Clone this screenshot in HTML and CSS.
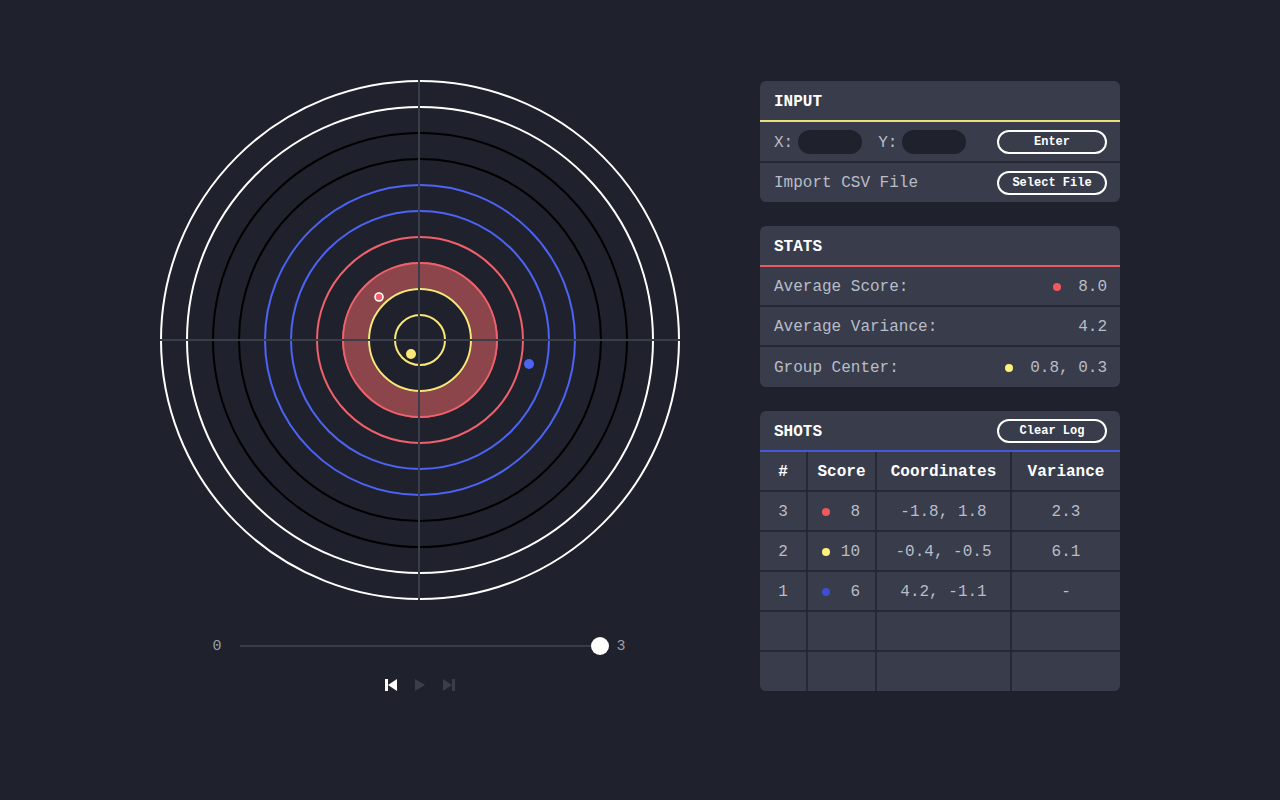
FILE: index.html
```html
<!DOCTYPE html>
<html>
<head>
<meta charset="utf-8">
<link rel="stylesheet" href="styles.css">
</head>
<body>
<div class="app">
  <div class="left">
    <svg class="target" width="520" height="520" viewBox="-260 -260 520 520">
      <circle r="65" fill="none" stroke="#8b454b" stroke-width="26"/>
      <circle r="259" class="ring" stroke="#ffffff"/>
      <circle r="233" class="ring" stroke="#ffffff"/>
      <circle r="207" class="ring" stroke="#000000"/>
      <circle r="181" class="ring" stroke="#000000"/>
      <circle r="155" class="ring" stroke="#4c63f4"/>
      <circle r="129" class="ring" stroke="#4c63f4"/>
      <circle r="103" class="ring" stroke="#f0616b"/>
      <circle r="77" class="ring" stroke="#f0616b"/>
      <circle r="51" class="ring" stroke="#fbe678"/>
      <circle r="25" class="ring" stroke="#fbe678"/>
      <line x1="-1" y1="-260" x2="-1" y2="260" class="cross"/>
      <line x1="-260" y1="0" x2="260" y2="0" class="cross"/>
      <circle cx="-41" cy="-43" r="4" fill="#f0616b" stroke="#ffffff" stroke-width="1.6"/>
      <circle cx="-9" cy="14" r="5" fill="#fbe678"/>
      <circle cx="109" cy="24" r="5" fill="#4c63f4"/>
    </svg>
    <div class="slider-row">
      <span class="slabel">0</span>
      <div class="track"><div class="thumb"></div></div>
      <span class="slabel">3</span>
    </div>
    <div class="controls">
      <svg width="12" height="12" viewBox="0 0 12 12"><rect x="0" y="0" width="3" height="12" fill="#ffffff"/><polygon points="12,0 12,12 3,6" fill="#ffffff"/></svg>
      <svg width="12" height="12" viewBox="0 0 12 12"><polygon points="1,0 11,6 1,12" fill="#3a3e4c"/></svg>
      <svg width="12" height="12" viewBox="0 0 12 12"><polygon points="0,0 9,6 0,12" fill="#3a3e4c"/><rect x="9" y="0" width="3" height="12" fill="#3a3e4c"/></svg>
    </div>
  </div>
  <div class="right">
    <section class="panel">
      <div class="panel-head head-yellow"><span>INPUT</span></div>
      <div class="row divided">
        <div class="inputs">
          <span>X:</span><span class="field"></span>
          <span class="ylabel">Y:</span><span class="field"></span>
        </div>
        <button class="btn">Enter</button>
      </div>
      <div class="row">
        <span>Import CSV File</span>
        <button class="btn">Select File</button>
      </div>
    </section>
    <section class="panel">
      <div class="panel-head head-red"><span>STATS</span></div>
      <div class="row stat divided">
        <span>Average Score:</span>
        <span class="val"><i class="dot dot-red"></i>8.0</span>
      </div>
      <div class="row stat divided">
        <span>Average Variance:</span>
        <span class="val">4.2</span>
      </div>
      <div class="row stat last-stat">
        <span>Group Center:</span>
        <span class="val"><i class="dot dot-yellow"></i>0.8, 0.3</span>
      </div>
    </section>
    <section class="panel">
      <div class="panel-head head-blue"><span>SHOTS</span><button class="btn">Clear Log</button></div>
      <div class="table">
        <div class="th">#</div><div class="th">Score</div><div class="th">Coordinates</div><div class="th">Variance</div>
        <div class="td">3</div><div class="td score"><i class="dot dot-red"></i>8</div><div class="td">-1.8, 1.8</div><div class="td">2.3</div>
        <div class="td">2</div><div class="td score"><i class="dot dot-yellow"></i>10</div><div class="td">-0.4, -0.5</div><div class="td">6.1</div>
        <div class="td">1</div><div class="td score"><i class="dot dot-blue"></i>6</div><div class="td">4.2, -1.1</div><div class="td">-</div>
        <div class="td"></div><div class="td"></div><div class="td"></div><div class="td"></div>
        <div class="td last"></div><div class="td last"></div><div class="td last"></div><div class="td last"></div>
      </div>
    </section>
  </div>
</div>
</body>
</html>
```

FILE: styles.css
```css
html, body {
  margin: 0;
  padding: 0;
  background: #1f222c;
  font-family: "Liberation Mono", "DejaVu Sans Mono", monospace;
  color: #b9bdc8;
  font-size: 16px;
}

.app {
  display: flex;
  align-items: flex-start;
  padding: 80px 0 0 160px;
  gap: 80px;
}

.left {
  width: 520px;
  display: flex;
  flex-direction: column;
  align-items: center;
}

.target {
  display: block;
}

.ring {
  fill: none;
  stroke-width: 2;
}

.cross {
  stroke: #3a3d4a;
  stroke-width: 2;
}

.slider-row {
  display: flex;
  align-items: center;
  height: 20px;
  margin-top: 36px;
  margin-left: -2px;
}

.slabel {
  width: 10px;
  font-size: 15px;
  color: #9a9ea9;
  line-height: 20px;
  padding-top: 1px;
}

.slabel:first-child {
  margin-left: 1px;
  margin-right: -1px;
}

.track {
  position: relative;
  width: 360px;
  height: 2px;
  background: #393c49;
  margin: 0 17px 0 18px;
}

.thumb {
  position: absolute;
  right: -9px;
  top: -8px;
  width: 18px;
  height: 18px;
  border-radius: 50%;
  background: #ffffff;
}

.controls {
  display: flex;
  gap: 17px;
  margin-top: 23px;
}

.controls svg {
  display: block;
}

.right {
  width: 360px;
  margin-top: 1px;
  display: flex;
  flex-direction: column;
  gap: 24px;
}

.panel {
  background: #383c4b;
  border-radius: 6px;
  overflow: hidden;
}

.panel-head {
  height: 41px;
  box-sizing: border-box;
  padding: 2px 13px 0 14px;
  display: flex;
  align-items: center;
  justify-content: space-between;
  font-weight: bold;
  color: #ffffff;
  font-size: 16px;
}

.head-yellow { border-bottom: 2px solid #e9df7c; }
.head-red { border-bottom: 2px solid #e85a5f; }
.head-blue { border-bottom: 2px solid #4658d8; }

.head-blue .btn {
  margin-top: -2px;
}

.row {
  height: 41px;
  box-sizing: border-box;
  padding: 0 13px 0 14px;
  display: flex;
  align-items: center;
  justify-content: space-between;
}

.row.stat {
  height: 40px;
  padding-top: 2px;
}

.row.last-stat {
  height: 40px;
  padding-top: 1px;
}

.row:last-child {
  height: 39px;
}

.row.last-stat:last-child {
  height: 40px;
}

.divided {
  border-bottom: 2px solid #262934;
}

.inputs {
  display: flex;
  align-items: center;
}

.inputs span:not(.field) {
  padding-top: 2px;
}

.field {
  display: inline-block;
  width: 64px;
  height: 24px;
  border-radius: 12px;
  background: #1f222c;
  margin-left: 5px;
}

.ylabel {
  margin-left: 16px;
}

.btn {
  width: 110px;
  height: 24px;
  border: 2px solid #ffffff;
  border-radius: 13px;
  background: transparent;
  color: #ffffff;
  font-family: "Liberation Mono", "DejaVu Sans Mono", monospace;
  font-weight: bold;
  font-size: 12px;
  padding: 0;
}

.val {
  display: flex;
  align-items: center;
}

.dot {
  display: inline-block;
  width: 8px;
  height: 8px;
  border-radius: 50%;
  margin-right: 17px;
}

.dot-red { background: #f0595c; }
.dot-yellow { background: #fdf07b; }
.dot-blue { background: #3b4fd0; }

.table {
  display: grid;
  grid-template-columns: 46px 67px 133px 1fr;
  gap: 2px;
  background: #262934;
}

.th, .td {
  background: #383c4b;
  height: 38px;
  box-sizing: border-box;
  padding-top: 2px;
  display: flex;
  align-items: center;
  justify-content: center;
}

.th {
  color: #ffffff;
  font-weight: bold;
}

.td.last {
  height: 39px;
}

.td.score {
  justify-content: space-between;
  padding: 2px 15px 0 14px;
}

.td.score .dot {
  margin-right: 0;
}
```
